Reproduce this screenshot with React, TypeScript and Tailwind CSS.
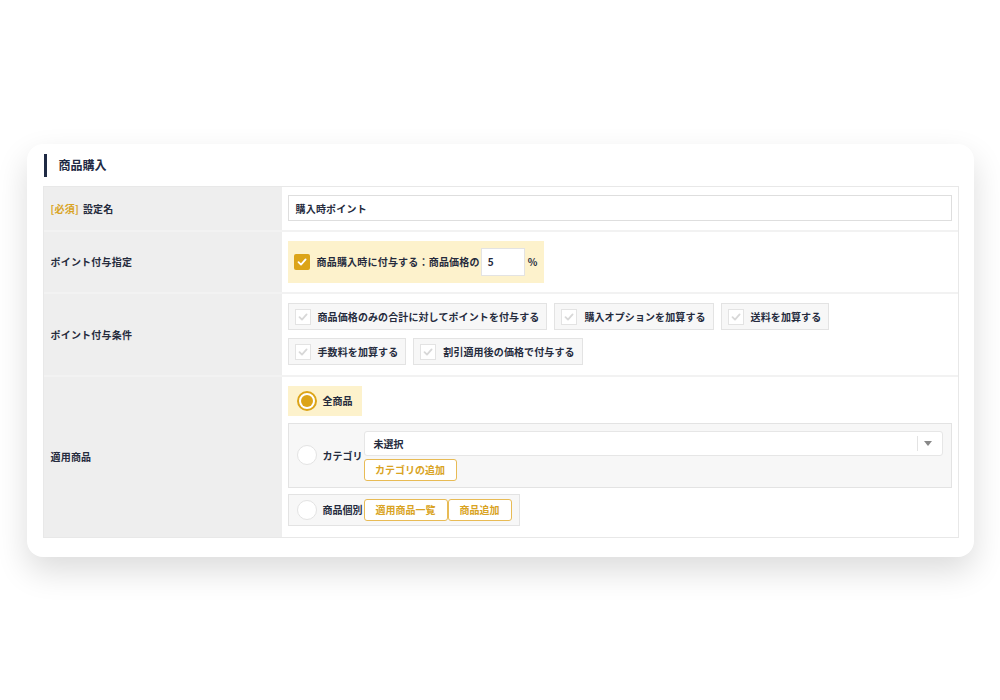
import React from "react";

const font = { fontFamily: '"Noto Sans CJK JP", "Noto Sans", sans-serif' };

function CheckMark({ color }: { color: string }) {
  return (
    <svg width="10" height="10" viewBox="0 0 10 10" fill="none">
      <path d="M1.5 5.2 L4 7.6 L8.6 2.4" stroke={color} strokeWidth="1.8" strokeLinecap="round" strokeLinejoin="round" />
    </svg>
  );
}

function GrayCheck({ label }: { label: string }) {
  return (
    <div className="flex items-center h-[27px] pl-[6px] pr-[7px] gap-[7px] bg-[#f7f7f7] border border-[#e3e3e3]">
      <div className="w-[16px] h-[16px] bg-white border border-[#e3e3e3] flex items-center justify-center">
        <CheckMark color="#d8d8d8" />
      </div>
      <span className="text-[10px] font-bold text-[#252b3d] tracking-[0.01em] whitespace-nowrap">{label}</span>
    </div>
  );
}

function OButton({ label, w }: { label: string; w: string }) {
  return (
    <button className={`${w} h-[22px] bg-white border-[1.5px] border-[#e8bb55] rounded-[3px] text-[10px] font-bold text-[#d9a323] flex items-center justify-center`}>
      {label}
    </button>
  );
}

function EmptyRadio() {
  return <div className="w-[20px] h-[20px] rounded-full bg-white border border-[#e3e3e3] shrink-0" />;
}

export default function App() {
  return (
    <div className="w-[1000px] h-[700px] bg-white flex items-center justify-center" style={font}>
      <div className="w-[947px] h-[413px] bg-white rounded-[16px] shadow-[0_14px_32px_rgba(0,0,0,0.14)] pt-[10px] pl-[16px] pr-[15px] pb-[20px] flex flex-col">
        <div className="flex items-center h-[23px] ml-[1px]">
          <div className="w-[3px] h-[23px] bg-[#1f2a44]" />
          <span className="ml-[12px] text-[12px] font-bold text-[#1f2a44]">商品購入</span>
        </div>
        <div className="mt-[9px] border border-[#e8e8e8] flex flex-col">
          {/* Row 1 */}
          <div className="flex h-[45px] border-b-2 border-[#f2f2f2]">
            <div className="w-[238px] bg-[#eeeeee] flex items-center pl-[7px] text-[10px] font-bold text-[#252b3d] tracking-[0.02em]">
              <span className="text-[#d9a323]">[必須]</span>
              <span className="ml-[4px]">設定名</span>
            </div>
            <div className="flex-1 flex items-center px-[6px]">
              <div className="w-full h-[26px] border border-[#dedede] bg-white flex items-center pl-[7px] text-[10px] font-bold text-[#252b3d] tracking-[0.02em]">
                購入時ポイント
              </div>
            </div>
          </div>
          {/* Row 2 */}
          <div className="flex h-[62px] border-b-2 border-[#f2f2f2]">
            <div className="w-[238px] bg-[#eeeeee] flex items-center pl-[7px] text-[10px] font-bold text-[#252b3d] tracking-[0.02em]">
              ポイント付与指定
            </div>
            <div className="flex-1 flex items-center px-[6px]">
              <div className="h-[42px] w-[256px] bg-[#fdf2cc] flex items-center pl-[6px]">
                <div className="w-[16px] h-[16px] bg-[#dca418] rounded-[2px] flex items-center justify-center">
                  <CheckMark color="#ffffff" />
                </div>
                <span className="ml-[7px] text-[10px] font-bold text-[#252b3d] tracking-[0.02em] whitespace-nowrap">
                  商品購入時に付与する：商品価格の
                </span>
                <div className="ml-[1px] w-[44px] h-[28px] bg-white border border-[#e3e3e3] flex items-center pl-[6px] text-[10px] font-bold text-[#252b3d]">
                  5
                </div>
                <span className="ml-[3px] text-[10px] font-bold text-[#252b3d]">%</span>
              </div>
            </div>
          </div>
          {/* Row 3 */}
          <div className="flex h-[83px] border-b-2 border-[#f2f2f2]">
            <div className="w-[238px] bg-[#eeeeee] flex items-center pl-[7px] text-[10px] font-bold text-[#252b3d] tracking-[0.02em]">
              ポイント付与条件
            </div>
            <div className="flex-1 flex flex-col justify-center gap-[8px] px-[6px]">
              <div className="flex gap-[7px]">
                <GrayCheck label="商品価格のみの合計に対してポイントを付与する" />
                <GrayCheck label="購入オプションを加算する" />
                <GrayCheck label="送料を加算する" />
              </div>
              <div className="flex gap-[7px]">
                <GrayCheck label="手数料を加算する" />
                <GrayCheck label="割引適用後の価格で付与する" />
              </div>
            </div>
          </div>
          {/* Row 4 */}
          <div className="flex h-[160px]">
            <div className="w-[238px] bg-[#eeeeee] flex items-center pl-[7px] text-[10px] font-bold text-[#252b3d] tracking-[0.02em]">
              適用商品
            </div>
            <div className="flex-1 flex flex-col pt-[9px] px-[6px]">
              <div className="w-[74px] h-[30px] bg-[#fdf2cc] flex items-center pl-[9px]">
                <div className="w-[20px] h-[20px] rounded-full border-2 border-[#dca418] bg-white flex items-center justify-center">
                  <div className="w-[12px] h-[12px] rounded-full bg-[#dca418]" />
                </div>
                <span className="ml-[6px] text-[10px] font-bold text-[#252b3d]">全商品</span>
              </div>
              <div className="mt-[7px] h-[65px] bg-[#f7f7f7] border border-[#e3e3e3] flex items-center pl-[8px] pr-[8px]">
                <EmptyRadio />
                <span className="ml-[6px] w-[41px] text-[10px] font-bold text-[#252b3d] whitespace-nowrap">カテゴリ</span>
                <div className="flex-1 flex flex-col gap-[3px] pt-[1px]">
                  <div className="h-[25px] bg-white border border-[#e6e6e6] rounded-[3px] flex items-center pl-[9px] pr-[10px]">
                    <span className="flex-1 text-[10px] font-bold text-[#252b3d]">未選択</span>
                    <div className="w-px h-[15px] bg-[#e3e3e3]" />
                    <svg className="ml-[6px]" width="8" height="5" viewBox="0 0 8 5">
                      <path d="M0 0 L8 0 L4 5 Z" fill="#888888" />
                    </svg>
                  </div>
                  <OButton label="カテゴリの追加" w="w-[93px]" />
                </div>
              </div>
              <div className="mt-[6px] w-[232px] h-[32px] bg-[#f7f7f7] border border-[#e3e3e3] flex items-center pl-[8px]">
                <EmptyRadio />
                <span className="ml-[6px] w-[41px] text-[10px] font-bold text-[#252b3d] whitespace-nowrap">商品個別</span>
                <OButton label="適用商品一覧" w="w-[84px]" />
                <OButton label="商品追加" w="w-[64px]" />
              </div>
            </div>
          </div>
        </div>
      </div>
    </div>
  );
}
